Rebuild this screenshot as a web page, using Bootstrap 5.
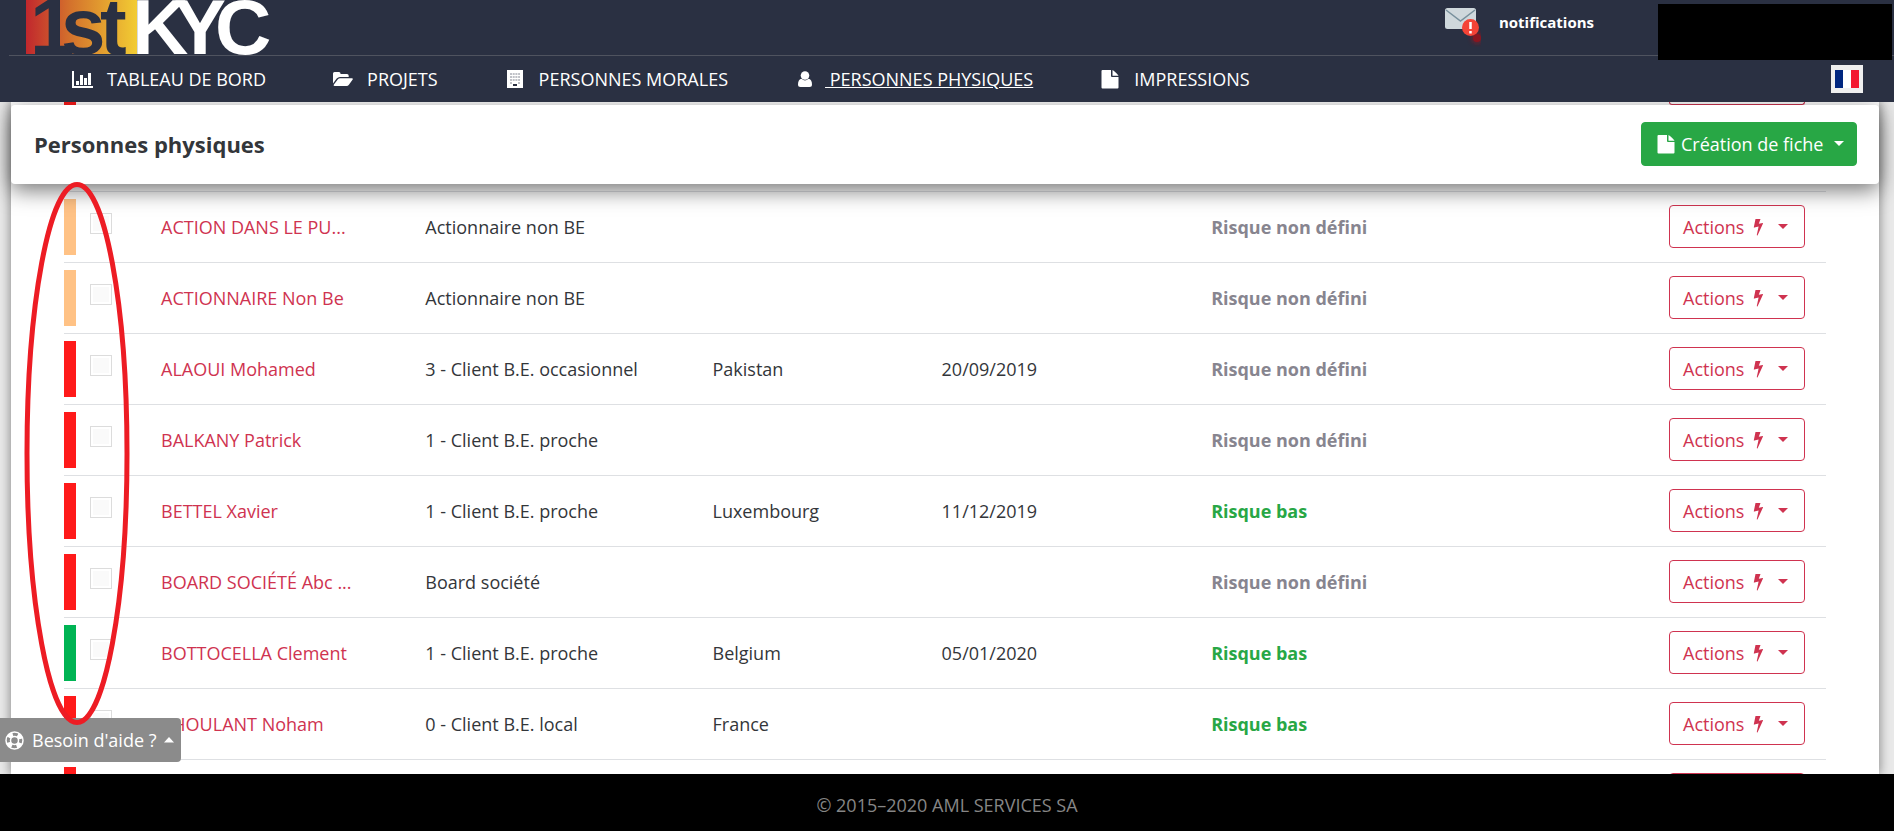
<!DOCTYPE html>
<html lang="fr">
<head>
<meta charset="utf-8">
<meta name="viewport" content="width=device-width, initial-scale=1">
<title>1stKYC - Personnes physiques</title>
<link href="https://cdn.jsdelivr.net/npm/bootstrap@5.3.0/dist/css/bootstrap.min.css" rel="stylesheet">
<style>
  body { font-family: "Open Sans", "Noto Sans", sans-serif; font-size: 18px; line-height: 26px; background: #e9e9e9; color: #33363a; }
  .site-header { background: #2a3042; z-index: 5; }
  .brand-row { height: 56px; margin-left: 9px; padding-left: 17px; border-bottom: 1px solid #4f535f; }
  .notif { right: 300px; top: 7px; color: #fff; font-size: 15px; font-weight: 700; line-height: 30px; gap: 18px; }
  .account { right: 2px; top: 4px; width: 234px; height: 56px; background: #000; }
  .main-nav { height: 46px; padding: 0 31px 0 71px; gap: 65px; }
  .main-nav a { color: #fff; text-decoration: none; gap: 12px; }
  .main-nav a.active { gap: 8px; }
  .main-nav a.active span { text-decoration: underline; }
  .main-nav svg { width: 24px; height: 20px; }
  .lang-btn { width: 32px; height: 28px; background: #efefef; border: 0; padding: 0; }
  .lang-btn svg { width: 24px; height: 18px; }
  .sheet { margin: 0 15px 0 11px; padding: 0 53px; background: #fff; box-shadow: 0 0 10px 1px rgba(0,0,0,.4); }
  .title-bar { top: 3px; left: 11px; right: 15px; height: 79px; padding: 0 22px 2px 23px; background: #fff; border-radius: 4px; box-shadow: 0 6px 22px 0 rgba(0,0,0,.55); z-index: 2; }
  .title-bar h1 { font-size: 22px; font-weight: 700; line-height: 28px; }
  .btn { font-size: 18px; line-height: 26px; border-radius: 4px; }
  .btn-create { background: #28a745; border-color: #28a745; color: #fff; padding: 8px 12px 8px 15px; gap: 6px; }
  .btn-action { border: 1px solid #cf3350; color: #cf3350; height: 43px; width: 136px; padding: 0 13px; }
  .btn-action::after { margin-left: 14px; }
  .people { table-layout: fixed; }
  .people td { height: 71px; padding: 0; border-bottom: 1px solid #dee0e3; vertical-align: middle; }
  .people tr.past-row td { height: 89px; vertical-align: top; }
  .people a { color: #cf3350; text-decoration: none; }
  .flagbar { width: 12px; height: 56px; background: #ff1a1a; }
  .flagbar.orange { background: #ffc285; }
  .flagbar.green { background: #00b454; }
  .past-row .flagbar { height: 11px; }
  .past-row .btn-action { height: 3px; border-top: 0; border-radius: 0 0 4px 4px; }
  .pick { appearance: none; width: 22px; height: 21px; margin: 0 0 6px 14px; border: 1px solid #dcdcdc; background: #fafafa; box-shadow: inset 0 0 0 2px #fff; }
  .people td.risk { font-weight: 700; color: #87858f; }
  .people td.risk.low { color: #28a745; }
  .c-pick { width: 97px; } .c-name { width: 15%; } .c-type { width: 16.3%; } .c-land { width: 13%; }
  .c-date { width: 15.3%; } .c-act { width: 157px; }
  .site-footer { height: 57px; background: #000; color: #868686; z-index: 5; }
  .help { left: 0; bottom: 69px; height: 44px; background: #8b8b8b; color: #fff; border: 0; border-radius: 0 4px 4px 0; padding: 0 7px 0 5px; gap: 8px; z-index: 6; }
  .marker { left: 24px; top: 180px; width: 108px; height: 547px; z-index: 7; pointer-events: none; }
</style>
</head>
<body class="vh-100 d-flex flex-column overflow-hidden position-relative">
<svg class="d-none">
  <symbol id="i-file" viewBox="0 0 18 20"><path fill="currentColor" d="M1.500 1h8.500v6a1 1 0 0 0 1 1h6.500v10.500a1 1 0 0 1-1 1h-15a1 1 0 0 1-1-1V2a1 1 0 0 1 1-1zM11.500 1c.5 0 6 5 6 5.700h-6z"/></symbol>
  <symbol id="i-bolt" viewBox="0 0 10 18"><path fill="currentColor" d="M2.500 1h5L5.800 5.800l3.900-.9c.3 0 .4.200.3.500L4.600 17.300c-.2.400-.9.300-.8-.2l1.800-8.500-4.300 1c-.4.100-.6-.1-.5-.4z"/></symbol>
</svg>

<header class="site-header position-relative flex-shrink-0">
  <div class="brand-row">
    <svg class="d-block" width="250" height="55" viewBox="0 0 250 55" role="img" aria-label="1stKYC" font-family="Liberation Sans, Arial, sans-serif" font-weight="700">
      <defs><linearGradient id="heat"><stop offset="0" stop-color="#c1272d"/><stop offset=".4" stop-color="#d4722c"/><stop offset="1" stop-color="#f2cc33"/></linearGradient></defs>
      <rect width="111" height="54" fill="url(#heat)"/>
      <path fill="#2a3042" d="M23 0h11v54H23z"/>
      <text fill="#2a3042" font-size="80" x="4 35 74" y="54">1st</text>
      <text fill="#fff" font-size="78" x="106 148 189" y="54">KYC</text>
    </svg>
  </div>
  <div class="notif position-absolute d-flex">
    <svg width="40" height="40" viewBox="0 0 40 40" aria-hidden="true">
      <defs><filter id="glow" x="-1" y="-1" width="3" height="3"><feGaussianBlur stdDeviation="2"/></filter></defs>
      <rect x="4" y="1" width="31" height="21" rx="2.500" fill="#cfd8dc"/><path d="M5 3l14.500 11L34 3" fill="none" stroke="#78909c" stroke-width="1.500"/>
      <circle cx="36" cy="31" r="6" fill="#a0121a" opacity=".5" filter="url(#glow)"/><circle cx="36" cy="31" r="4" fill="#8a1620"/>
      <circle cx="29.500" cy="20.500" r="8.500" fill="#f44336"/><path d="M29.500 15v7M29.500 24v2.500" stroke="#fff" stroke-width="2.500"/>
    </svg>
    <span>notifications</span>
  </div>
  <div class="account position-absolute"></div>
  <nav class="main-nav d-flex align-items-center">
    <a href="#" class="d-flex align-items-center"><svg viewBox="0 0 24 20" fill="#fff"><path d="M1 2h2v15h19v2H1zM5 12h3v4H5zM9 6h3v10H9zM13 9h3v7h-3zM17 4h3v12h-3z"/></svg><span>TABLEAU DE BORD</span></a>
    <a href="#" class="d-flex align-items-center"><svg viewBox="0 0 24 20" fill="#fff"><path d="M2 14.500V4.500Q2 3 3.500 3H8q1.500 0 1.500 1.500V5H16q1.700 0 1.700 1.700V8H9Q7 8 5.700 9.600zM9 9.200h12q1.500.2.700 1.300l-3.600 5Q17 17 15.500 17H3.500q-1.500-.2-.6-1.400l4-5.300Q7.800 9.200 9 9.200z"/></svg><span>PROJETS</span></a>
    <a href="#" class="d-flex align-items-center"><svg viewBox="0 0 24 20"><path fill="#fff" d="M4 1h16v18H4z"/><path d="M7 5h10M7 8h10M7 11h10M7 14h2M15 14h2" stroke="#2a3042" stroke-opacity=".6" stroke-width="1" stroke-dasharray="2 .7"/><path fill="#2a3042" d="M10 15h4v2h-4z"/></svg><span>PERSONNES MORALES</span></a>
    <a href="#" class="active d-flex align-items-center" aria-current="page"><svg viewBox="0 0 24 20" fill="#fff"><circle cx="12" cy="6.500" r="4.300"/><path d="M8.600 9.800Q12 13 15.400 9.800 19 10.500 19 15.500 19 18 16.500 18h-9Q5 18 5 15.500 5 10.500 8.600 9.800z"/></svg><span>&nbsp;PERSONNES PHYSIQUES</span></a>
    <a href="#" class="d-flex align-items-center"><svg><use href="#i-file"/></svg><span>IMPRESSIONS</span></a>
    <button class="lang-btn ms-auto d-flex align-items-center justify-content-center" aria-label="Français"><svg viewBox="0 0 24 18"><path fill="#00267f" d="M0 0h8v18H0z"/><path fill="#fff" d="M8 0h8v18H8z"/><path fill="#f31830" d="M16 0h8v18h-8z"/></svg></button>
  </nav>
</header>

<main class="flex-grow-1 position-relative overflow-hidden">
  <div class="title-bar position-absolute d-flex align-items-center justify-content-between">
    <h1 class="m-0">Personnes physiques</h1>
    <button class="btn btn-create dropdown-toggle d-flex align-items-center"><svg width="18" height="20"><use href="#i-file"/></svg>Création de fiche</button>
  </div>
  <div class="sheet h-100">
    <table class="people w-100">
      <colgroup><col class="c-pick"><col class="c-name"><col class="c-type"><col class="c-land"><col class="c-date"><col><col class="c-act"></colgroup>
      <tbody>
        <tr class="past-row"><td><div class="flagbar"></div></td><td></td><td></td><td></td><td></td><td></td><td><div class="btn-action"></div></td></tr>
        <tr><td><div class="d-flex align-items-center"><div class="flagbar orange"></div><input type="checkbox" class="pick" aria-label="ACTION DANS LE PU..."></div></td><td><a href="#">ACTION DANS LE PU...</a></td><td>Actionnaire non BE</td><td></td><td></td><td class="risk">Risque non défini</td><td><button class="btn btn-action dropdown-toggle d-flex align-items-center">Actions<svg class="ms-2" width="12" height="18"><use href="#i-bolt"/></svg></button></td></tr>
        <tr><td><div class="d-flex align-items-center"><div class="flagbar orange"></div><input type="checkbox" class="pick" aria-label="ACTIONNAIRE Non Be"></div></td><td><a href="#">ACTIONNAIRE Non Be</a></td><td>Actionnaire non BE</td><td></td><td></td><td class="risk">Risque non défini</td><td><button class="btn btn-action dropdown-toggle d-flex align-items-center">Actions<svg class="ms-2" width="12" height="18"><use href="#i-bolt"/></svg></button></td></tr>
        <tr><td><div class="d-flex align-items-center"><div class="flagbar"></div><input type="checkbox" class="pick" aria-label="ALAOUI Mohamed"></div></td><td><a href="#">ALAOUI Mohamed</a></td><td>3 - Client B.E. occasionnel</td><td>Pakistan</td><td>20/09/2019</td><td class="risk">Risque non défini</td><td><button class="btn btn-action dropdown-toggle d-flex align-items-center">Actions<svg class="ms-2" width="12" height="18"><use href="#i-bolt"/></svg></button></td></tr>
        <tr><td><div class="d-flex align-items-center"><div class="flagbar"></div><input type="checkbox" class="pick" aria-label="BALKANY Patrick"></div></td><td><a href="#">BALKANY Patrick</a></td><td>1 - Client B.E. proche</td><td></td><td></td><td class="risk">Risque non défini</td><td><button class="btn btn-action dropdown-toggle d-flex align-items-center">Actions<svg class="ms-2" width="12" height="18"><use href="#i-bolt"/></svg></button></td></tr>
        <tr><td><div class="d-flex align-items-center"><div class="flagbar"></div><input type="checkbox" class="pick" aria-label="BETTEL Xavier"></div></td><td><a href="#">BETTEL Xavier</a></td><td>1 - Client B.E. proche</td><td>Luxembourg</td><td>11/12/2019</td><td class="risk low">Risque bas</td><td><button class="btn btn-action dropdown-toggle d-flex align-items-center">Actions<svg class="ms-2" width="12" height="18"><use href="#i-bolt"/></svg></button></td></tr>
        <tr><td><div class="d-flex align-items-center"><div class="flagbar"></div><input type="checkbox" class="pick" aria-label="BOARD SOCIÉTÉ Abc ..."></div></td><td><a href="#">BOARD SOCIÉTÉ Abc ...</a></td><td>Board société</td><td></td><td></td><td class="risk">Risque non défini</td><td><button class="btn btn-action dropdown-toggle d-flex align-items-center">Actions<svg class="ms-2" width="12" height="18"><use href="#i-bolt"/></svg></button></td></tr>
        <tr><td><div class="d-flex align-items-center"><div class="flagbar green"></div><input type="checkbox" class="pick" aria-label="BOTTOCELLA Clement"></div></td><td><a href="#">BOTTOCELLA Clement</a></td><td>1 - Client B.E. proche</td><td>Belgium</td><td>05/01/2020</td><td class="risk low">Risque bas</td><td><button class="btn btn-action dropdown-toggle d-flex align-items-center">Actions<svg class="ms-2" width="12" height="18"><use href="#i-bolt"/></svg></button></td></tr>
        <tr><td><div class="d-flex align-items-center"><div class="flagbar"></div><input type="checkbox" class="pick" aria-label="CHOULANT Noham"></div></td><td><a href="#">CHOULANT Noham</a></td><td>0 - Client B.E. local</td><td>France</td><td></td><td class="risk low">Risque bas</td><td><button class="btn btn-action dropdown-toggle d-flex align-items-center">Actions<svg class="ms-2" width="12" height="18"><use href="#i-bolt"/></svg></button></td></tr>
        <tr><td><div class="flagbar"></div></td><td></td><td></td><td></td><td></td><td></td><td><button class="btn btn-action d-block" aria-label="Actions"></button></td></tr>
      </tbody>
    </table>
  </div>
</main>

<footer class="site-footer flex-shrink-0 d-flex align-items-center justify-content-center pt-1">© 2015–2020 AML SERVICES SA</footer>

<button class="help position-fixed d-flex align-items-center"><svg width="19" height="19" viewBox="0 0 19 19" fill="none" stroke="#fff" aria-hidden="true"><circle cx="9.500" cy="9.500" r="8.500" stroke-width="1.500"/><circle cx="9.500" cy="9.500" r="4" stroke-width="1.500"/><circle cx="9.500" cy="9.500" r="6.200" stroke-width="4.500" stroke-dasharray="4.800 4.939" stroke-dashoffset="-2.470"/></svg>Besoin d'aide ?<svg width="10" height="6" aria-hidden="true"><path fill="#fff" d="M0 5.500L5 0l5 5.500z"/></svg></button>
<svg class="marker position-absolute" viewBox="0 0 108 547" aria-hidden="true"><ellipse cx="53" cy="273.500" rx="50" ry="269" fill="none" stroke="#ed1c24" stroke-width="5"/></svg>
<script src="https://cdn.jsdelivr.net/npm/bootstrap@5.3.0/dist/js/bootstrap.bundle.min.js"></script>
</body>
</html>
